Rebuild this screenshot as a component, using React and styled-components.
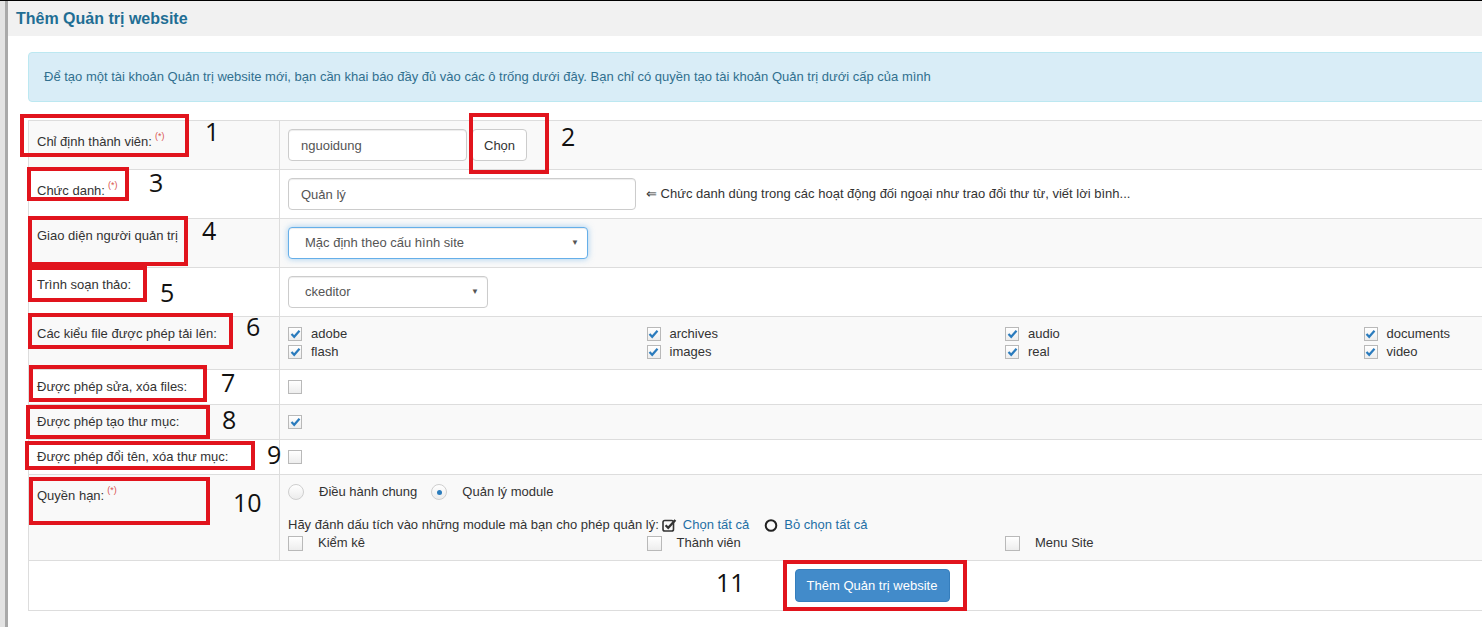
import React from 'react';
import styled, { createGlobalStyle } from 'styled-components';

const GlobalStyle = createGlobalStyle`
  html, body {
    margin: 0;
    padding: 0;
    overflow: hidden;
    background: #fff;
  }
  body {
    font-family: "Liberation Sans", Arial, sans-serif;
    font-size: 13px;
    color: #333;
  }
`;

const Page = styled.div`
  position: relative;
  width: 1482px;
  height: 627px;
  overflow: hidden;
`;

const Shell = styled.div`
  display: flex;
  min-height: 626px;
  border-top: 1px solid #000;
`;

const Rail = styled.div`
  flex: 0 0 5px;
  background: #e3e3e3;
  border-right: 3px solid #a9a9a9;
`;

const Main = styled.div`
  flex: 1;
  min-width: 0;
`;

const Heading = styled.div`
  height: 35px;
  display: flex;
  align-items: center;
  padding-left: 8px;
  background: #f1f1f1;
`;

const Title = styled.h3`
  margin: 0;
  font-size: 16px;
  font-weight: bold;
  color: #1f6e94;
`;

const Body = styled.div`
  width: 1688px;
  padding: 16px 0 0 20px;
`;

const Alert = styled.div`
  padding: 15px;
  margin-bottom: 18px;
  line-height: 18px;
  border: 1px solid #bce8f1;
  border-radius: 4px;
  background: #d9edf7;
  color: #31708f;
`;

const FormTable = styled.table`
  width: 1688px;
  table-layout: fixed;
  border-collapse: collapse;
  border: 1px solid #ddd;
`;

const Row = styled.tr`
  background: ${(p) => (p.$striped ? '#f9f9f9' : '#fff')};
`;

const Cell = styled.td`
  border: 1px solid #ddd;
  padding: 8px;
  vertical-align: top;
  line-height: 18px;
  text-align: ${(p) => (p.$center ? 'center' : 'left')};
`;

const Required = styled.sup`
  color: #d9534f;
  font-size: 9px;
  margin-left: 3px;
  position: relative;
  top: -2px;
`;

const Line = styled.div`
  display: flex;
  align-items: center;
  min-height: 18px;
  margin-bottom: ${(p) => p.$gap || 0}px;
`;

const TextInput = styled.input`
  box-sizing: border-box;
  width: ${(p) => p.$w}px;
  height: 32px;
  padding: 6px 12px;
  border: 1px solid #ccc;
  border-radius: 4px;
  box-shadow: inset 0 1px 1px rgba(0, 0, 0, 0.075);
  font: 13px "Liberation Sans", Arial, sans-serif;
  color: #555;
  background: #fff;
`;

const PlainButton = styled.button`
  box-sizing: border-box;
  height: 32px;
  margin-left: 5px;
  padding: 0 11px;
  border: 1px solid #ccc;
  border-radius: 4px;
  background: #fff;
  font: 13px "Liberation Sans", Arial, sans-serif;
  color: #333;
`;

const Hint = styled.span`
  margin-left: 10px;
  color: #333;
`;

const SelectBox = styled.div`
  box-sizing: border-box;
  width: ${(p) => p.$w}px;
  height: 32px;
  display: flex;
  align-items: center;
  justify-content: space-between;
  padding: 0 8px 0 16px;
  border: 1px solid ${(p) => (p.$focus ? '#66afe9' : '#ccc')};
  border-radius: 4px;
  background: #fff;
  color: #555;
  box-shadow: ${(p) =>
    p.$focus
      ? 'inset 0 1px 1px rgba(0,0,0,.075), 0 0 6px rgba(102,175,233,.6)'
      : 'inset 0 1px 1px rgba(0,0,0,.075)'};
`;

const Caret = styled.span`
  font-size: 8px;
  color: #555;
`;

const Grid = styled.div`
  display: grid;
  grid-template-columns: repeat(4, 358.5px);
`;

const CheckItem = styled.label`
  display: flex;
  align-items: center;
  height: 18px;
  gap: ${(p) => p.$gap || 9}px;
`;

const BoxShape = styled.span`
  box-sizing: border-box;
  width: ${(p) => p.$size || 14}px;
  height: ${(p) => p.$size || 14}px;
  display: inline-flex;
  align-items: center;
  justify-content: center;
  border: 1px solid #b9b9b9;
  background: linear-gradient(#fff, #ededed);
  flex: none;
`;

const RadioShape = styled.span`
  box-sizing: border-box;
  width: 16px;
  height: 16px;
  border-radius: 50%;
  border: 1px solid #cfcfcf;
  background: linear-gradient(#fff, #ececec);
  display: inline-flex;
  align-items: center;
  justify-content: center;
  flex: none;
  &::after {
    content: '';
    width: 5px;
    height: 5px;
    border-radius: 50%;
    background: ${(p) => (p.$on ? '#2b7cbc' : 'transparent')};
  }
`;

const RadioItem = styled.label`
  display: flex;
  align-items: center;
  gap: 15px;
  margin-right: 14px;
`;

const LinkText = styled.a`
  color: #1f6fa5;
  text-decoration: none;
  margin-left: 6px;
  margin-right: 15px;
`;

const IconWrap = styled.span`
  display: inline-flex;
  margin-left: ${(p) => p.$ml || 0}px;
`;

const SubmitButton = styled.button`
  box-sizing: border-box;
  width: 155px;
  height: 33px;
  border: 1px solid #357ebd;
  border-radius: 4px;
  background: #428bca;
  color: #fff;
  font: 13px "Liberation Sans", Arial, sans-serif;
`;

const RedBox = styled.div`
  position: absolute;
  box-sizing: border-box;
  left: ${(p) => p.$x}px;
  top: ${(p) => p.$y}px;
  width: ${(p) => p.$w}px;
  height: ${(p) => p.$h}px;
  border: 4px solid #e1141d;
`;

const Num = styled.div`
  position: absolute;
  left: ${(p) => p.$x}px;
  top: ${(p) => p.$y}px;
  font-family: "Open Sans", sans-serif;
  font-size: 25px;
  line-height: 1;
  color: #111;
`;

const Check = ({ on, size }) => (
  <BoxShape $size={size}>
    {on && (
      <svg width="11" height="10" viewBox="0 0 11 10">
        <path d="M1.5 5 L4.2 7.8 L9.5 1.8" fill="none" stroke="#2a7bbd" strokeWidth="2.2" />
      </svg>
    )}
  </BoxShape>
);

const CheckSquareIcon = () => (
  <svg width="15" height="14" viewBox="0 0 15 14">
    <rect x="1" y="2.5" width="10.5" height="10.5" rx="1.8" fill="none" stroke="#333" strokeWidth="1.6" />
    <path d="M3.6 7.2 L6.2 9.8 L13.4 2" fill="none" stroke="#333" strokeWidth="2.3" />
  </svg>
);

const CircleIcon = () => (
  <svg width="14" height="14" viewBox="0 0 14 14">
    <circle cx="7" cy="7.5" r="5.3" fill="none" stroke="#222" strokeWidth="2" />
  </svg>
);

const fileTypes = [
  ['adobe', 'archives', 'audio', 'documents'],
  ['flash', 'images', 'real', 'video'],
];

const modules = ['Kiểm kê', 'Thành viên', 'Menu Site'];

const boxes = [
  [20, 114, 169, 43],
  [469, 113, 80, 61],
  [27, 167, 102, 34],
  [28, 216, 160, 50],
  [28, 266, 119, 36],
  [28, 313, 205, 36],
  [29, 365, 178, 37],
  [26, 405, 184, 34],
  [25, 441, 230, 29],
  [29, 477, 181, 48],
  [783, 560, 184, 51],
];

const numbers = [
  ['1', 205, 124],
  ['2', 561, 129],
  ['3', 149, 175],
  ['4', 202, 223],
  ['5', 160, 285],
  ['6', 246, 319],
  ['7', 221, 375],
  ['8', 222, 412],
  ['9', 267, 447],
  ['10', 233, 495],
  ['11', 716, 575],
];

export default function App() {
  return (
    <Page>
      <GlobalStyle />
      <Shell>
        <Rail />
        <Main>
          <Heading>
            <Title>Thêm Quản trị website</Title>
          </Heading>
          <Body>
            <Alert>
              Để tạo một tài khoản Quản trị website mới, bạn cần khai báo đầy đủ vào các ô trống dưới đây. Bạn chỉ có
              quyền tạo tài khoản Quản trị dưới cấp của mình
            </Alert>
            <FormTable>
              <colgroup>
                <col style={{ width: 251 }} />
                <col />
              </colgroup>
              <tbody>
                <Row $striped>
                  <Cell>
                    Chỉ định thành viên:<Required>(*)</Required>
                  </Cell>
                  <Cell>
                    <Line>
                      <TextInput $w={179} defaultValue="nguoidung" />
                      <PlainButton>Chọn</PlainButton>
                    </Line>
                  </Cell>
                </Row>
                <Row>
                  <Cell>
                    Chức danh:<Required>(*)</Required>
                  </Cell>
                  <Cell>
                    <Line>
                      <TextInput $w={348} defaultValue="Quản lý" />
                      <Hint>⇐ Chức danh dùng trong các hoạt động đối ngoại như trao đổi thư từ, viết lời bình...</Hint>
                    </Line>
                  </Cell>
                </Row>
                <Row $striped>
                  <Cell>Giao diện người quản trị</Cell>
                  <Cell>
                    <SelectBox $w={300} $focus>
                      <span>Mặc định theo cấu hình site</span>
                      <Caret>▼</Caret>
                    </SelectBox>
                  </Cell>
                </Row>
                <Row>
                  <Cell>Trình soạn thảo:</Cell>
                  <Cell>
                    <SelectBox $w={200}>
                      <span>ckeditor</span>
                      <Caret>▼</Caret>
                    </SelectBox>
                  </Cell>
                </Row>
                <Row $striped>
                  <Cell>Các kiểu file được phép tải lên:</Cell>
                  <Cell>
                    {fileTypes.map((line, i) => (
                      <Grid key={i}>
                        {line.map((t) => (
                          <CheckItem key={t}>
                            <Check on />
                            <span>{t}</span>
                          </CheckItem>
                        ))}
                      </Grid>
                    ))}
                  </Cell>
                </Row>
                <Row>
                  <Cell>Được phép sửa, xóa files:</Cell>
                  <Cell>
                    <Line>
                      <Check />
                    </Line>
                  </Cell>
                </Row>
                <Row $striped>
                  <Cell>Được phép tạo thư mục:</Cell>
                  <Cell>
                    <Line>
                      <Check on />
                    </Line>
                  </Cell>
                </Row>
                <Row>
                  <Cell>Được phép đổi tên, xóa thư mục:</Cell>
                  <Cell>
                    <Line>
                      <Check />
                    </Line>
                  </Cell>
                </Row>
                <Row $striped>
                  <Cell>
                    Quyền hạn:<Required>(*)</Required>
                  </Cell>
                  <Cell>
                    <Line $gap={15}>
                      <RadioItem>
                        <RadioShape />
                        <span>Điều hành chung</span>
                      </RadioItem>
                      <RadioItem>
                        <RadioShape $on />
                        <span>Quản lý module</span>
                      </RadioItem>
                    </Line>
                    <Line>
                      <span>Hãy đánh dấu tích vào những module mà bạn cho phép quản lý:</span>
                      <IconWrap $ml={3}>
                        <CheckSquareIcon />
                      </IconWrap>
                      <LinkText href="#">Chọn tất cả</LinkText>
                      <IconWrap>
                        <CircleIcon />
                      </IconWrap>
                      <LinkText href="#">Bỏ chọn tất cả</LinkText>
                    </Line>
                    <Grid>
                      {modules.map((m) => (
                        <CheckItem key={m} $gap={15}>
                          <Check size={15} />
                          <span>{m}</span>
                        </CheckItem>
                      ))}
                    </Grid>
                  </Cell>
                </Row>
                <Row>
                  <Cell colSpan={2} $center>
                    <SubmitButton>Thêm Quản trị website</SubmitButton>
                  </Cell>
                </Row>
              </tbody>
            </FormTable>
          </Body>
        </Main>
      </Shell>
      {boxes.map(([x, y, w, h], i) => (
        <RedBox key={i} $x={x} $y={y} $w={w} $h={h} />
      ))}
      {numbers.map(([t, x, y]) => (
        <Num key={t} $x={x} $y={y - 5}>
          {t}
        </Num>
      ))}
    </Page>
  );
}
